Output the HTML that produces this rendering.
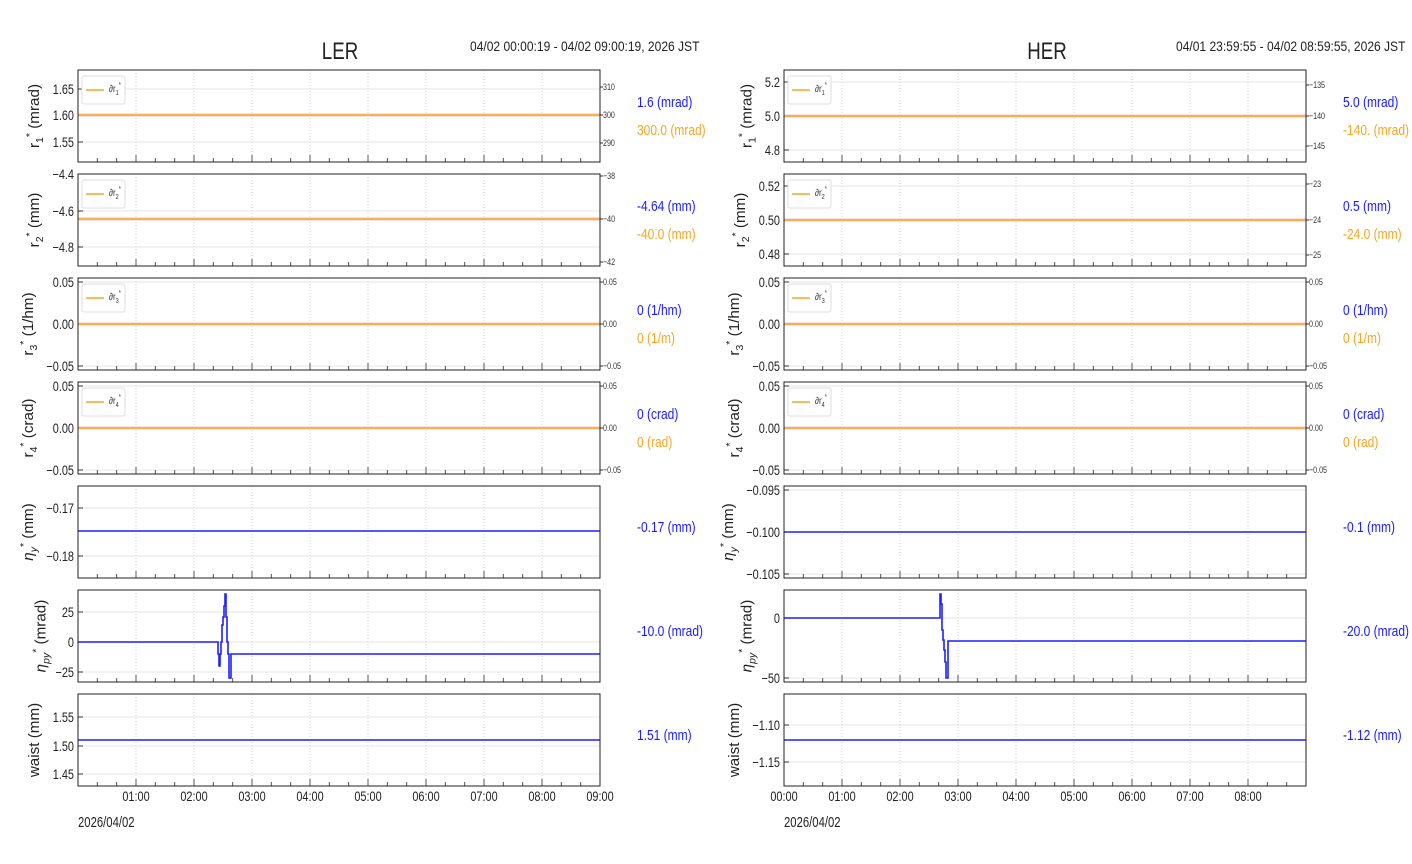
<!DOCTYPE html>
<html><head><meta charset="utf-8"><style>
html,body{margin:0;padding:0;background:#fff;width:1412px;height:864px;overflow:hidden}
svg text{font-family:"Liberation Sans",sans-serif}
</style></head><body>
<svg id="s" width="1412" height="864" xmlns="http://www.w3.org/2000/svg"></svg>
<script>
const S=document.getElementById('s');let h='';
const T=(x,y,t,o)=>{o=o||{};const sx=o.sx||0.8;const tr=o.rot?`translate(${x},${y}) rotate(-90) scale(${sx},1)`:`translate(${x},${y}) scale(${sx},1)`;h+=`<text x="0" y="0" font-size="${o.fs||13}" fill="${o.c||'#222'}" text-anchor="${o.a||'start'}" transform="${tr}">${t}</text>`;};
const L=(x1,y1,x2,y2,c,w,d)=>{h+=`<line x1="${x1}" y1="${y1}" x2="${x2}" y2="${y2}" stroke="${c}" stroke-width="${w||1}" ${d?`stroke-dasharray="${d}"`:''}/>`;};
const tops=[70,174,278,382,486,590,694],PH=92;
const rl=(n,u)=>'r<tspan font-size="10" dy="4">'+n+'</tspan><tspan font-size="10" dy="-10">*</tspan><tspan dy="6"> ('+u+')</tspan>';
const el=(n,u)=>'<tspan font-style="italic">η</tspan><tspan font-size="10" dy="4" font-style="italic">'+n+'</tspan><tspan font-size="10" dy="-10">*</tspan><tspan dy="6"> ('+u+')</tspan>';
const sides=[
{x0:78,title:'LER',date:'04/02 00:00:19 - 04/02 09:00:19, 2026 JST',tx:340,dx:470,vx:637,
 p:[
 {yt:[[89,'1.65'],[115,'1.60'],[142,'1.55']],rt:[[87,'310'],[115,'300'],[143,'290']],line:115,or:1,lab:rl(1,'mrad'),v:['1.6 (mrad)','300.0 (mrad)']},
 {yt:[[174,'−4.4'],[211,'−4.6'],[247,'−4.8']],rt:[[176,'−38'],[219,'−40'],[262,'−42']],line:219,or:1,lab:rl(2,'mm'),v:['-4.64 (mm)','-40.0 (mm)']},
 {yt:[[282,'0.05'],[324,'0.00'],[366,'−0.05']],rt:[[282,'0.05'],[324,'0.00'],[366,'−0.05']],line:324,or:1,lab:rl(3,'1/hm'),v:['0 (1/hm)','0 (1/m)']},
 {yt:[[386,'0.05'],[428,'0.00'],[470,'−0.05']],rt:[[386,'0.05'],[428,'0.00'],[470,'−0.05']],line:428,or:1,lab:rl(4,'crad'),v:['0 (crad)','0 (rad)']},
 {yt:[[508,'−0.17'],[556,'−0.18']],line:531,lab:el('y','mm'),v:['-0.17 (mm)']},
 {yt:[[612,'25'],[642,'0'],[672,'−25']],path:'M78,642 H218 V654 H219 V666 H220 V654 H221 V642 H222 V625 H223 V617 H224 V606 H225 V594 H226 V617 H227 V642 H228 V654 H229 V678 H231 V654 H600',lab:el('py','mrad'),v:['-10.0 (mrad)']},
 {yt:[[717,'1.55'],[746,'1.50'],[774,'1.45']],line:740,lab:'waist (mm)',v:['1.51 (mm)']}
 ],xl:[[136,'01:00'],[194,'02:00'],[252,'03:00'],[310,'04:00'],[368,'05:00'],[426,'06:00'],[484,'07:00'],[542,'08:00'],[600,'09:00']]},
{x0:784,title:'HER',date:'04/01 23:59:55 - 04/02 08:59:55, 2026 JST',tx:1047,dx:1176,vx:1343,
 p:[
 {yt:[[82,'5.2'],[116,'5.0'],[150,'4.8']],rt:[[85,'−135'],[116,'−140'],[146,'−145']],line:116,or:1,lab:rl(1,'mrad'),v:['5.0 (mrad)','-140. (mrad)']},
 {yt:[[186,'0.52'],[220,'0.50'],[254,'0.48']],rt:[[184,'−23'],[220,'−24'],[255,'−25']],line:220,or:1,lab:rl(2,'mm'),v:['0.5 (mm)','-24.0 (mm)']},
 {yt:[[282,'0.05'],[324,'0.00'],[366,'−0.05']],rt:[[282,'0.05'],[324,'0.00'],[366,'−0.05']],line:324,or:1,lab:rl(3,'1/hm'),v:['0 (1/hm)','0 (1/m)']},
 {yt:[[386,'0.05'],[428,'0.00'],[470,'−0.05']],rt:[[386,'0.05'],[428,'0.00'],[470,'−0.05']],line:428,or:1,lab:rl(4,'crad'),v:['0 (crad)','0 (rad)']},
 {yt:[[490,'−0.095'],[532,'−0.100'],[574,'−0.105']],line:532,lab:el('y','mm'),v:['-0.1 (mm)']},
 {yt:[[618,'0'],[678,'−50']],path:'M784,618 H940 V594 H941 V604 H942 V630 H943 V640 H944 V650 H945 V662 H946 V678 H947 V678 H948 V641 H1306',lab:el('py','mrad'),v:['-20.0 (mrad)']},
 {yt:[[725,'−1.10'],[762,'−1.15']],line:740,lab:'waist (mm)',v:['-1.12 (mm)']}
 ],xl:[[784,'00:00'],[842,'01:00'],[900,'02:00'],[958,'03:00'],[1016,'04:00'],[1074,'05:00'],[1132,'06:00'],[1190,'07:00'],[1248,'08:00']]}
];
for(const s of sides){
 const x0=s.x0,x1=x0+522;
 T(s.tx,59,s.title,{fs:24,a:'middle',sx:0.78});
 T(s.dx,51,s.date,{fs:14,sx:0.86});
 s.p.forEach((p,i)=>{
  const y0=tops[i],y1=y0+PH;
  for(let k=1;k<9;k++){const x=x0+k*58;L(x,y0,x,y1,'#c8c8c8',0.8,'1,2');}
  let mw=0;
  for(const [y,t] of p.yt){L(x0,y,x1,y,'#dcdcdc',0.8);L(x0,y,x0+5,y,'#333',1);T(x0-4,y+5,t,{fs:14,a:'end',sx:0.78});mw=Math.max(mw,t.length);}
  for(let k=1;k<27;k++){const x=x0+k*58/3;L(x,y1,x,y1-(k%3==0?7:4),'#555',1);}
  if(p.rt)for(const [y,t] of p.rt){L(x1,y,x1+3,y,'#333',1);T(x1+3,y+3,t,{fs:9.5,c:'#333',sx:0.75});}
  if(p.or){L(x0,p.line,x1,p.line,'#f0c0b8',3);L(x0,p.line,x1,p.line,'#f5a623',1.2);}
  else if(p.line)L(x0,p.line,x1,p.line,'#1f1fff',1.6);
  if(p.path)h+=`<path d="${p.path}" fill="none" stroke="#1f1fff" stroke-width="1.6"/>`;
  h+=`<rect x="${x0}" y="${y0}" width="522" height="${PH}" fill="none" stroke="#222" stroke-width="1"/>`;
  if(p.or){h+=`<rect x="${x0+4}" y="${y0+6}" width="43" height="28" rx="2" fill="#fff" stroke="#ddd"/>`;L(x0+8,y0+20,x0+26,y0+20,'#f5a623',1.6);T(x0+31,y0+22,'∂r<tspan font-size="7" dy="3">'+(i+1)+'</tspan><tspan font-size="7" dy="-8">*</tspan>',{fs:10,c:'#333',sx:0.8});}
  const cy=y0+PH/2;
  const lx=x0-14-mw*6.2;
  T(lx,cy,p.lab,{fs:14.5,a:'middle',rot:1,sx:1.05});
  if(p.v.length==2){T(s.vx,y0+37,p.v[0],{fs:15,c:'#1a1aff',sx:0.8});T(s.vx,y0+65,p.v[1],{fs:15,c:'#f5a623',sx:0.8});}
  else T(s.vx,y0+46,p.v[0],{fs:15,c:'#1a1aff',sx:0.8});
 });
 for(const [x,t] of s.xl)T(x,801,t,{fs:14,a:'middle',sx:0.78});
 T(x0,827,'2026/04/02',{fs:14.5,sx:0.78});
}
S.innerHTML=h;
</script>
</body></html>
